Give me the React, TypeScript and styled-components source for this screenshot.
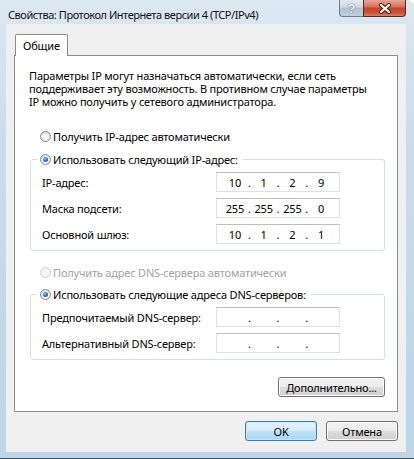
import React from 'react'
import styled, { createGlobalStyle, css } from 'styled-components'

const GlobalStyle = createGlobalStyle`
  html, body {
    margin: 0;
    padding: 0;
    background: #ffffff;
  }
  body {
    font-family: "Noto Sans", "Liberation Sans", sans-serif;
    font-size: 11px;
    letter-spacing: -0.18px;
    color: #000;
  }
`

const Window = styled.div`
  width: 414px;
  height: 459px;
  box-sizing: border-box;
  display: flex;
  flex-direction: column;
  padding: 0 9px 7px 7px;
  background: linear-gradient(to bottom, #dce8f2 0%, #cbdcea 30%, #bfd4e6 100%);
  border-radius: 0 7px 0 0;
  border-bottom: 1px solid #3d5467;
`

const TitleBar = styled.div`
  height: 25px;
  display: flex;
  align-items: flex-start;
  flex-shrink: 0;
`

const Title = styled.div`
  flex: 1;
  padding: 7px 0 0 1px;
  font-size: 11px;
  letter-spacing: -0.45px;
  line-height: 15px;
  color: #111;
`

const CaptionButtons = styled.div`
  display: flex;
  margin-right: -1px;
`

const CaptionButton = styled.div<{ $variant: 'help' | 'close' }>`
  height: 17px;
  box-sizing: border-box;
  display: flex;
  align-items: center;
  justify-content: center;
  border: 1px solid #6c7c8c;
  border-top: none;
  ${p => p.$variant === 'help' ? css`
    width: 24px;
    border-radius: 0 0 0 4px;
    border-right: none;
    background: linear-gradient(to bottom, #e3eaf0 0%, #cdd8e2 45%, #b1c1cf 50%, #c2d1de 100%);
  ` : css`
    width: 43px;
    border-color: #5a2a20;
    border-radius: 0 0 4px 0;
    background: linear-gradient(to bottom, #e6a597 0%, #d8735d 42%, #c4432a 50%, #cc5238 80%, #dc8268 100%);
  `}
`

const HelpGlyph = styled.span`
  font-family: "Liberation Sans", sans-serif;
  font-weight: bold;
  font-size: 13px;
  line-height: 13px;
  color: #f4f7fa;
  text-shadow: 0 0 1px #4b5b6a, 0 0 1px #4b5b6a;
`

const Client = styled.div`
  flex: 1;
  display: flex;
  flex-direction: column;
  background: #f0f0f0;
  padding: 9px 7px 10px 7px;
  box-shadow: 0 0 0 1px #e9f0f6;
`

const TabStrip = styled.div`
  display: flex;
  height: 21px;
  padding-left: 1px;
`

const Tab = styled.div`
  position: relative;
  z-index: 1;
  height: 22px;
  box-sizing: border-box;
  padding: 3px 7px 0 7px;
  border: 1px solid #898c95;
  border-bottom: none;
  border-radius: 2px 2px 0 0;
  background: #ffffff;
  line-height: 15px;
`

const Panel = styled.div`
  flex: 1;
  display: flex;
  flex-direction: column;
  background: #ffffff;
  border: 1px solid #898c95;
  padding: 13px 12px 14px 14px;
`

const Description = styled.p`
  margin: 0;
  line-height: 13px;
`

const RadioRow = styled.label<{ $disabled?: boolean; $top?: number }>`
  display: flex;
  align-items: center;
  height: 16px;
  margin-top: ${p => p.$top ?? 0}px;
  padding-left: 11px;
  color: ${p => p.$disabled ? '#a3a3a3' : '#000'};
`

const RadioDot = styled.span<{ $checked?: boolean; $disabled?: boolean }>`
  position: relative;
  width: 11px;
  height: 11px;
  box-sizing: border-box;
  border-radius: 50%;
  margin-right: 2px;
  flex-shrink: 0;
  border: 1px solid ${p => p.$disabled ? '#cfcfcf' : '#8b8b8b'};
  background: ${p => p.$disabled
    ? '#f4f4f4'
    : 'radial-gradient(circle at 50% 60%, #ffffff 0%, #f0f0f0 45%, #c9c9c9 100%)'};
  ${p => p.$checked && css`
    &::after {
      content: '';
      position: absolute;
      left: 2px;
      top: 2px;
      width: 5px;
      height: 5px;
      border-radius: 50%;
      background: radial-gradient(circle at 40% 35%, #8fd0ff 0%, #2b7ac4 45%, #0b3f80 100%);
    }
  `}
`

const Group = styled.fieldset<{ $top: number }>`
  margin: ${p => p.$top}px 0 0 1px;
  padding: 0 0 6px 0;
  border: 1px solid #d5dfe5;
  border-radius: 3px;
  min-width: 0;
`

const Legend = styled.legend`
  margin-left: 6px;
  padding: 0 5px 0 0;
  height: 16px;
  display: flex;

  ${RadioRow} {
    padding-left: 3px;
  }
`

const FieldGrid = styled.div`
  display: grid;
  grid-template-columns: 174px 124px;
  row-gap: 6px;
  padding: 5px 0 0 11px;
`

const FieldLabel = styled.span`
  display: flex;
  align-items: center;
  height: 20px;
`

const IpBox = styled.div`
  height: 20px;
  box-sizing: border-box;
  display: flex;
  align-items: center;
  padding: 0 7px 0 7px;
  border: 1px solid #dcdfe4;
  border-top-color: #bcc0c6;
  background: #ffffff;
`

const Octet = styled.span`
  width: 22px;
  text-align: center;
`

const Dot = styled.span`
  width: 7px;
  text-align: center;
`

const Button = styled.button<{ $default?: boolean; $width: number }>`
  width: ${p => p.$width}px;
  height: 20px;
  box-sizing: border-box;
  padding: 0;
  font-family: inherit;
  font-size: 11px;
  letter-spacing: inherit;
  color: #000;
  border: 1px solid #707070;
  border-radius: 3px;
  background: linear-gradient(to bottom, #f2f2f2 0%, #ebebeb 50%, #dddddd 51%, #cfcfcf 100%);
  box-shadow: inset 0 0 0 1px #fbfbfb;
  ${p => p.$default && css`
    border-color: #3c7fb1;
    background: linear-gradient(to bottom, #e5f4fc 0%, #d4ecfa 50%, #bde2f7 51%, #a9d6f1 100%);
    box-shadow: inset 0 0 0 1px #bfe6fb;
  `}
`

const MoreRow = styled.div`
  margin-top: auto;
  display: flex;
  justify-content: flex-end;
`

const DialogButtons = styled.div`
  display: flex;
  justify-content: flex-end;
  gap: 9px;
  margin-top: 9px;
`

const IpField = ({ value }: { value?: string[] }) => (
  <IpBox>
    {[0, 1, 2, 3].map(i => (
      <React.Fragment key={i}>
        {i > 0 && <Dot>.</Dot>}
        <Octet>{value ? value[i] : ''}</Octet>
      </React.Fragment>
    ))}
  </IpBox>
)

const ipRows = [
  { label: 'IP-адрес:', value: ['10', '1', '2', '9'] },
  { label: 'Маска подсети:', value: ['255', '255', '255', '0'] },
  { label: 'Основной шлюз:', value: ['10', '1', '2', '1'] },
]

const dnsRows = [
  { label: 'Предпочитаемый DNS-сервер:' },
  { label: 'Альтернативный DNS-сервер:' },
]

export default function App() {
  return (
    <>
      <GlobalStyle />
      <Window>
        <TitleBar>
          <Title>Свойства: Протокол Интернета версии 4 (TCP/IPv4)</Title>
          <CaptionButtons>
            <CaptionButton $variant="help"><HelpGlyph>?</HelpGlyph></CaptionButton>
            <CaptionButton $variant="close">
              <svg width="14" height="11" viewBox="0 0 14 11">
                <path d="M3 2 L11 9 M11 2 L3 9" stroke="#4a1a12" strokeWidth="4" strokeLinecap="round" />
                <path d="M3 2 L11 9 M11 2 L3 9" stroke="#ffffff" strokeWidth="2.2" strokeLinecap="round" />
              </svg>
            </CaptionButton>
          </CaptionButtons>
        </TitleBar>
        <Client>
          <TabStrip>
            <Tab>Общие</Tab>
          </TabStrip>
          <Panel>
            <Description>
              Параметры IP могут назначаться автоматически, если сеть<br />
              поддерживает эту возможность. В противном случае параметры<br />
              IP можно получить у сетевого администратора.
            </Description>

            <RadioRow $top={20}>
              <RadioDot />Получить IP-адрес автоматически
            </RadioRow>

            <Group $top={7}>
              <Legend>
                <RadioRow><RadioDot $checked />Использовать следующий IP-адрес:</RadioRow>
              </Legend>
              <FieldGrid>
                {ipRows.map(r => (
                  <React.Fragment key={r.label}>
                    <FieldLabel>{r.label}</FieldLabel>
                    <IpField value={r.value} />
                  </React.Fragment>
                ))}
              </FieldGrid>
            </Group>

            <RadioRow $top={13} $disabled>
              <RadioDot $disabled />Получить адрес DNS-сервера автоматически
            </RadioRow>

            <Group $top={6}>
              <Legend>
                <RadioRow><RadioDot $checked />Использовать следующие адреса DNS-серверов:</RadioRow>
              </Legend>
              <FieldGrid>
                {dnsRows.map(r => (
                  <React.Fragment key={r.label}>
                    <FieldLabel>{r.label}</FieldLabel>
                    <IpField />
                  </React.Fragment>
                ))}
              </FieldGrid>
            </Group>

            <MoreRow>
              <Button $width={107}>Дополнительно...</Button>
            </MoreRow>
          </Panel>
          <DialogButtons>
            <Button $default $width={72}>OK</Button>
            <Button $width={72}>Отмена</Button>
          </DialogButtons>
        </Client>
      </Window>
    </>
  )
}
